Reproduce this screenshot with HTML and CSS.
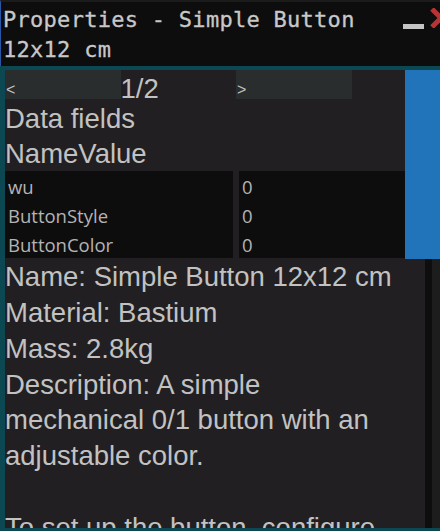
FILE: index.html
```html
<!DOCTYPE html>
<html lang="en">
<head>
<meta charset="utf-8">
<title>Properties - Simple Button</title>
<link rel="stylesheet" href="styles.css">
</head>
<body>
<div class="window">
  <header class="titlebar">
    <div class="title-lines">
      <div>Properties - Simple Button</div>
      <div>12x12 cm</div>
    </div>
    <span class="min"></span>
    <svg class="close" viewBox="0 0 22 20" width="22" height="20" aria-hidden="true">
      <path d="M2 1 L20 19 M2 19 L20 1" stroke="#b83434" stroke-width="5" fill="none"/>
    </svg>
  </header>
  <div class="frame">
    <div class="upper">
      <div class="panel">
        <div class="pager">
          <button class="pg-btn">&lt;</button>
          <span class="page">1/2</span>
          <button class="pg-btn">&gt;</button>
        </div>
        <div class="heading">Data fields</div>
        <div class="heading heading-cols">NameValue</div>
        <div class="table">
          <div class="cell">wu</div><div class="cell">0</div>
          <div class="cell">ButtonStyle</div><div class="cell">0</div>
          <div class="cell">ButtonColor</div><div class="cell">0</div>
        </div>
      </div>
      <div class="thumb"></div>
    </div>
    <div class="lower">
      <div class="desc">
        <p>Name: Simple Button 12x12 cm</p>
        <p>Material: Bastium</p>
        <p>Mass: 2.8kg</p>
        <p>Description: A simple mechanical 0/1 button with an adjustable color.</p>
        <p class="gap">To set up the button, configure the ButtonStyle and ButtonColor fields.</p>
      </div>
      <div class="track"></div>
      <div class="gutter"></div>
    </div>
  </div>
</div>
</body>
</html>
```
FILE: styles.css
```css
html, body {
  margin: 0;
  padding: 0;
}
body {
  width: 440px;
  height: 531px;
  overflow: hidden;
  background: #211f21;
  font-family: "Liberation Sans", Arial, sans-serif;
  color: #c2c2c2;
}
.window {
  display: flex;
  flex-direction: column;
  height: 531px;
}
.titlebar {
  flex: none;
  height: 64px;
  display: flex;
  align-items: flex-start;
  background: #0e0d0e;
  border-top: 2px solid #1b1b1b;
  border-left: 1px solid #2856a6;
  padding-left: 2px;
  overflow: hidden;
  font-family: "DejaVu Sans Mono", monospace;
  font-size: 22px;
  color: #c8c8c8;
}
.title-lines {
  flex: 1;
  padding-top: 3px;
  line-height: 30px;
  white-space: nowrap;
  letter-spacing: 0.28px;
  -webkit-text-stroke: 0.3px #c8c8c8;
}
.min {
  flex: none;
  width: 21px;
  height: 5px;
  margin-top: 22px;
  background: #c4c4c4;
}
.close {
  flex: none;
  margin-left: 6px;
  margin-right: -12px;
  margin-top: 6px;
}
.frame {
  flex: 1;
  min-height: 0;
  display: flex;
  flex-direction: column;
  border-top: 4px solid #0b4852;
  border-left: 5px solid #0b4852;
  border-bottom: 3px solid #0b4852;
  overflow: hidden;
}
.upper {
  flex: none;
  display: flex;
  height: 189px;
}
.panel {
  width: 400px;
  padding-bottom: 1px;
}
.thumb {
  flex: 1;
  background: #2174ba;
}
.pager {
  display: flex;
  align-items: flex-start;
  height: 31px;
}
.pg-btn {
  width: 115.5px;
  height: 29px;
  margin: 0;
  border: 0;
  padding: 10px 0 0 1px;
  background: #2a2d2e;
  font-family: "Liberation Sans", Arial, sans-serif;
  font-size: 16px;
  line-height: 18px;
  color: #c2c2c2;
  text-align: left;
  vertical-align: top;
  box-sizing: border-box;
}
.page {
  width: 115.5px;
  font-size: 27.5px;
  line-height: 31px;
  padding-top: 3px;
  height: 31px;
  box-sizing: border-box;
  white-space: nowrap;
}
.heading {
  height: 35px;
  font-size: 27.5px;
  line-height: 35px;
}
.heading-cols {
  height: 35px;
}
.table {
  display: grid;
  grid-template-columns: 228px 166px;
  column-gap: 6px;
}
.cell {
  height: 29px;
  box-sizing: border-box;
  padding: 2.5px 3px 0;
  background: #0e0d0e;
  font-family: "Open Sans", "Noto Sans", sans-serif;
  font-size: 18.5px;
  line-height: 26.5px;
  color: #b4b4b4;
  white-space: nowrap;
}
.lower {
  flex: 1;
  min-height: 0;
  display: flex;
}
.desc {
  width: 420px;
  flex: none;
  box-sizing: border-box;
  padding-right: 20px;
  font-size: 27.5px;
  line-height: 35.86px;
}
.desc p {
  margin: 0;
}
.desc .gap {
  margin-top: 35.86px;
}
.track {
  width: 7px;
  flex: none;
  background: #0f0e0f;
}
.gutter {
  flex: 1;
  background: #1e1d1e;
}
```
